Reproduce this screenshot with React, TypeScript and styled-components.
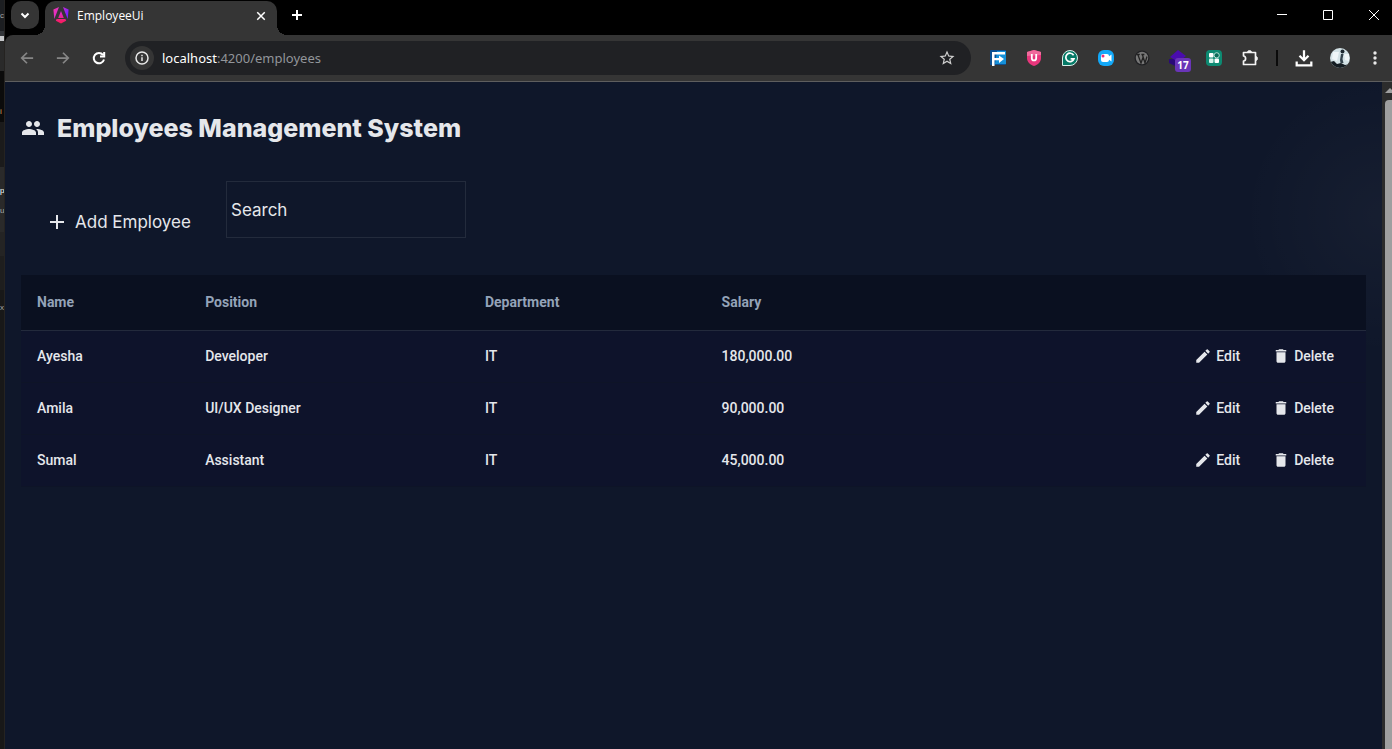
import React from "react";
import styled, { createGlobalStyle } from "styled-components";
import { MdGroup, MdAdd, MdEdit, MdDelete, MdStarBorder } from "react-icons/md";

const Global = createGlobalStyle`
  *, *::before, *::after { box-sizing: border-box; }
  body { margin: 0; background: #000; font-family: Roboto, "Noto Sans", sans-serif; }
  button, input { font: inherit; color: inherit; background: none; border: 0; padding: 0; margin: 0; outline: 0; }
  svg { display: block; flex: none; }
`;

const Desktop = styled.div`
  display: flex;
  height: 100vh;
  overflow: hidden;
`;

const EditorEdge = styled.aside`
  flex: none;
  width: 5px;
  overflow: hidden;
  display: flex;
  flex-direction: column;
  align-items: stretch;
  background: #181818;
  border-right: 1px solid #252321;
`;

const EdgeBlock = styled.div<{ $h: number; $bg?: string; $color?: string }>`
  flex: none;
  height: ${(p) => p.$h}px;
  background: ${(p) => p.$bg ?? "transparent"};
  color: ${(p) => p.$color ?? "#a8a8a8"};
  font: 400 8px/${(p) => p.$h}px "Liberation Sans", sans-serif;
`;

const BrowserWindow = styled.div`
  flex: 1;
  min-width: 0;
  display: flex;
  flex-direction: column;
  background: #000;
`;

const TabStrip = styled.header`
  flex: none;
  height: 35px;
  display: flex;
  align-items: flex-start;
  color: #fff;
`;

const TabSearch = styled.button`
  width: 28px;
  height: 28px;
  margin: 1px 6px 0;
  border-radius: 10px;
  background: #353535;
  display: grid;
  place-items: center;
`;

const Tab = styled.div`
  position: relative;
  width: 232px;
  height: 34px;
  margin-top: 1px;
  padding: 0 10px 5px 8px;
  border-radius: 10px 10px 0 0;
  background: #353535;
  display: flex;
  align-items: center;
  gap: 8px;
  font: 400 12px/16px "Open Sans", sans-serif;
  &::before, &::after {
    content: "";
    position: absolute;
    bottom: 0;
    width: 10px;
    height: 10px;
  }
  &::before { right: 100%; background: radial-gradient(circle at 0 0, transparent 10px, #353535 10px); }
  &::after { left: 100%; background: radial-gradient(circle at 100% 0, transparent 10px, #353535 10px); }
`;

const TabTitle = styled.span`
  flex: 1;
`;

const GlyphButton = styled.button<{ $w: number; $h: number }>`
  flex: none;
  width: ${(p) => p.$w}px;
  height: ${(p) => p.$h}px;
  display: grid;
  place-items: center;
`;

const WindowControls = styled.div`
  margin: 0 -5px 0 auto;
  display: flex;
`;

const Toolbar = styled.nav`
  flex: none;
  height: 47px;
  padding: 0 0 0 4px;
  background: #353535;
  border-bottom: 1px solid #5e5e5e;
  border-top-left-radius: 8px;
  display: flex;
  align-items: center;
  color: #fff;
`;

const Omnibox = styled.div`
  flex: 1;
  min-width: 0;
  height: 34px;
  margin: 0 9px 0 8px;
  padding: 0 5px;
  border-radius: 17px;
  background: #202124;
  display: flex;
  align-items: center;
`;

const SiteInfo = styled.button`
  width: 24px;
  height: 24px;
  margin-right: 8px;
  border-radius: 12px;
  background: #353535;
  display: grid;
  place-items: center;
`;

const Url = styled.span`
  flex: 1;
  font: 400 13px/20px "Noto Sans", sans-serif;
  color: #92959a;
  b { font-weight: 400; color: #fff; }
`;

const Divider = styled.span`
  width: 2px;
  height: 16px;
  margin: 0 8px;
  background: #0b0b0b;
`;

const Extension = styled(GlyphButton)`
  position: relative;
`;

const Badge = styled.span`
  position: absolute;
  right: 5px;
  bottom: 3px;
  width: 16px;
  height: 14px;
  border-radius: 3px;
  background: #6a35b8;
  color: #fff;
  font: 700 10px/14px "Noto Sans", sans-serif;
  text-align: center;
`;

const Viewport = styled.div`
  flex: 1;
  min-height: 0;
  display: flex;
`;

const Page = styled.main`
  flex: 1;
  min-width: 0;
  padding: 16px;
  color: #e5e7eb;
  background:
    radial-gradient(circle at 100% 20%, rgba(255, 255, 255, 0.03), transparent 140px),
    #0f172a;
`;

const ScrollTrack = styled.div`
  flex: none;
  width: 10px;
  padding-left: 3px;
  background: #2c2c2c;
  display: flex;
  flex-direction: column;
`;

const ScrollArrow = styled.svg`
  margin: 6px 0 7px;
`;

const ScrollThumb = styled.div`
  flex: 1;
  border-radius: 4px 0 0 0;
  background: #9f9f9f;
`;

const Title = styled.h1`
  margin: 12px 0 0;
  height: 36px;
  display: flex;
  align-items: center;
  gap: 12px;
  font: 800 25px/36px Inter, "Open Sans", sans-serif;
`;

const Actions = styled.div`
  margin-top: 35px;
  height: 57px;
  display: flex;
  align-items: flex-start;
  gap: 20px;
`;

const AddButton = styled.button`
  height: 40px;
  margin-top: 21px;
  width: 185px;
  padding-left: 24px;
  display: flex;
  align-items: center;
  gap: 6px;
  font: 400 17px/24px Inter, sans-serif;
`;

const Search = styled.input`
  width: 240px;
  height: 57px;
  padding: 0 4px;
  border: 1px solid #232b3c;
  font: 400 17px/24px Inter, sans-serif;
  &::placeholder { color: #e5e7eb; opacity: 1; }
`;

const Table = styled.table`
  width: 100%;
  margin-top: 37px;
  border-collapse: separate;
  border-spacing: 0;
  table-layout: fixed;
  font: 400 14px/20px Roboto, sans-serif;
  background: #0e132b;
`;

const Col = styled.col<{ $w?: string }>`
  width: ${(p) => p.$w ?? "auto"};
`;

const HeadCell = styled.th`
  height: 56px;
  padding: 0 16px 2px;
  text-align: left;
  font-weight: 700;
  color: #94a3b8;
  background: #0a1020;
  border-bottom: 1px solid #232a3c;
`;

const Cell = styled.td`
  height: 52px;
  padding: 0 16px 1px;
  font-weight: 500;
  border-bottom: 1px solid #0e1427;
`;

const RowActions = styled.div`
  display: flex;
  justify-content: flex-end;
  gap: 8px;
`;

const RowButton = styled.button`
  display: flex;
  align-items: center;
  gap: 4px;
  padding: 0 12px;
  &:last-child { padding-right: 16px; }
`;

const employees = [
  { name: "Ayesha", position: "Developer", department: "IT", salary: "180,000.00" },
  { name: "Amila", position: "UI/UX Designer", department: "IT", salary: "90,000.00" },
  { name: "Sumal", position: "Assistant", department: "IT", salary: "45,000.00" },
];

const Stroke = ({ d, size = 16, color = "#fff", width = 2 }: { d: string; size?: number; color?: string; width?: number }) => (
  <svg width={size} height={size} viewBox="0 0 16 16" fill="none" stroke={color} strokeWidth={width}>
    <path d={d} />
  </svg>
);

const AngularLogo = () => (
  <svg width="16" height="17" viewBox="0 0 16 17">
    <defs>
      <linearGradient id="ng" x1="0" y1="0" x2="1" y2="0.4">
        <stop offset="0" stopColor="#f637a8" />
        <stop offset="0.5" stopColor="#d62bd0" />
        <stop offset="1" stopColor="#7a22ff" />
      </linearGradient>
      <linearGradient id="ngr" x1="0" y1="0" x2="0" y2="1">
        <stop offset="0" stopColor="#d92bd8" />
        <stop offset="1" stopColor="#fb1a52" />
      </linearGradient>
    </defs>
    <path fill="url(#ng)" d="M6 0 .4 2.6 1.3 12 6 0zM10 0l5.600 2.600-.9 9.400L10 0z" />
    <path fill="url(#ngr)" d="M8 4 5.200 11h5.600L8 4zM3.600 12h8.800l.8 1.800L8 16.600l-5.200-2.800L3.600 12z" />
  </svg>
);

const extensions: React.ReactNode[] = [
  <svg key="f" width="16" height="16" viewBox="0 0 16 16">
    <rect width="16" height="15" rx="1" fill="#0b4f91" />
    <path d="M7 1h9v13H5z" fill="#1590d8" />
    <path d="M2 2h13v2.500H4.500V8H10v2.200H4.500V16H2z" fill="#fff" />
    <path d="M9 5.500 14 9l-5 4z" fill="#fff" />
  </svg>,
  <svg key="u" width="16" height="16" viewBox="0 0 16 16">
    <path d="M8 0 15 2v6c0 4-3 6.600-7 8-4-1.400-7-4-7-8V2z" fill="#e8367c" />
    <path d="M8 0 15 2v3L1 6V2z" fill="#f06a9c" />
    <path d="M5.800 4v4.200a2.200 2.200 0 0 0 4.400 0V4" fill="none" stroke="#fff" strokeWidth="1.800" />
  </svg>,
  <svg key="g" width="16" height="16" viewBox="0 0 16 16">
    <path d="M.5 15.500V8A7.500 7.500 0 1 1 8 15.500z" fill="#067a67" stroke="#d8efe9" />
    <path d="M11.600 5.200A4.200 4.200 0 1 0 12 8.800H8.600" fill="none" stroke="#fff" strokeWidth="1.700" />
  </svg>,
  <svg key="c" width="16" height="16" viewBox="0 0 16 16">
    <rect width="16" height="16" rx="6" fill="#12a8f8" />
    <rect x="3" y="4" width="8" height="8" rx="2" fill="#fff" />
    <path d="m10 7 3.500-2.500v7L10 9z" fill="#fff" />
    <circle cx="5" cy="6" r="1.500" fill="#ee2b7b" />
  </svg>,
  <svg key="w" width="16" height="16" viewBox="0 0 16 16">
    <circle cx="8" cy="8" r="7.500" fill="#202124" />
    <circle cx="8" cy="8" r="6.200" fill="#777" />
    <path d="M2.600 4.500h3.200M7.400 4.500h3M4 5l3 8 2-5.500M8.500 5l2.500 8 2-6.500" fill="none" stroke="#222" strokeWidth="1.300" />
  </svg>,
];

const Photo = () => (
  <svg width="20" height="20" viewBox="0 0 20 20">
    <clipPath id="photo"><circle cx="10" cy="10" r="10" /></clipPath>
    <g clipPath="url(#photo)">
      <path fill="#d3e2e6" d="M0 0h20v20H0z" />
      <path fill="#eff6f8" d="M3 4l6 0-2 9-5-2zM14 6h5v7l-4-1z" />
      <circle cx="12.500" cy="3.500" r="2" fill="#1c2830" />
      <path fill="#33434d" d="M11 6h2.500l-1 5 1 4h-3l-.5-3z" />
      <path fill="#141c22" d="M0 14l4-1 3 3 4-1 4 2 5-1v4H0z" />
    </g>
  </svg>
);

export default function App() {
  return (
    <Desktop>
      <Global />
      <EditorEdge aria-hidden="true">
        <EdgeBlock $h={31} $bg="#1c1e21">c</EdgeBlock>
        <EdgeBlock $h={5} $bg="#33363a" />
        <EdgeBlock $h={5} $bg="#c6c8ca" />
        <EdgeBlock $h={30} $bg="#2a2a2a" />
        <EdgeBlock $h={31} $bg="#0b0b0b" />
        <EdgeBlock $h={20} $bg="#0b0b0b" $color="#d9a560">i</EdgeBlock>
        <EdgeBlock $h={45} $bg="#1b1b1b" />
        <EdgeBlock $h={14} $bg="#2a2a2a" />
        <EdgeBlock $h={20} $bg="#2a2a2a" $color="#fff">p</EdgeBlock>
        <EdgeBlock $h={20} $bg="#2a2a2a">u</EdgeBlock>
        <EdgeBlock $h={11} $bg="#2a2a2a" />
        <EdgeBlock $h={24} $bg="#242424" />
        <EdgeBlock $h={34} $bg="#1e1e1e" />
        <EdgeBlock $h={8} />
        <EdgeBlock $h={20}>x</EdgeBlock>
      </EditorEdge>
      <BrowserWindow>
        <TabStrip>
          <TabSearch aria-label="Search tabs"><Stroke d="M4.500 6.500 8 10l3.500-3.500" /></TabSearch>
          <Tab>
            <AngularLogo />
            <TabTitle>EmployeeUi</TabTitle>
            <GlyphButton $w={12} $h={16} aria-label="Close tab"><Stroke size={12} d="m3 3 10 10M13 3 3 13" /></GlyphButton>
          </Tab>
          <GlyphButton $w={40} $h={30} aria-label="New tab"><Stroke d="M8 3v10M3 8h10" /></GlyphButton>
          <WindowControls>
            <GlyphButton $w={46} $h={30} aria-label="Minimize"><Stroke d="M3 7.500h10" width={1} /></GlyphButton>
            <GlyphButton $w={46} $h={30} aria-label="Maximize"><Stroke d="M3.500 3.500h9v9h-9z" width={1} /></GlyphButton>
            <GlyphButton $w={46} $h={30} aria-label="Close"><Stroke d="m3 3 10 10M13 3 3 13" width={1} /></GlyphButton>
          </WindowControls>
        </TabStrip>
        <Toolbar>
          <GlyphButton $w={36} $h={34} aria-label="Back"><Stroke d="M15 8H2M8 2 2 8l6 6" color="#868686" size={14} /></GlyphButton>
          <GlyphButton $w={36} $h={34} aria-label="Forward"><Stroke d="M1 8h13M8 2l6 6-6 6" color="#868686" size={14} /></GlyphButton>
          <GlyphButton $w={36} $h={34} aria-label="Reload"><Stroke d="M13 9.500A5.200 5.200 0 1 1 12 4.800M13.200 2v4.500H9" /></GlyphButton>
          <Omnibox>
            <SiteInfo aria-label="Site information">
              <svg width="16" height="16" viewBox="0 0 16 16" fill="none" stroke="#e8e8e8" strokeWidth="1.500">
                <circle cx="8" cy="8" r="6" />
                <path d="M8 7.200V11M8 4.800v1.500" />
              </svg>
            </SiteInfo>
            <Url><b>localhost</b>:4200/employees</Url>
            <GlyphButton $w={38} $h={30} aria-label="Bookmark"><MdStarBorder size={18} color="#d0d0d0" /></GlyphButton>
          </Omnibox>
          {extensions.map((icon, i) => (
            <GlyphButton key={i} $w={36} $h={34} aria-label="Extension">{icon}</GlyphButton>
          ))}
          <Extension $w={36} $h={34} aria-label="Extension, 17 items">
            <svg width="20" height="20" viewBox="0 0 20 20">
              <path d="M1 11v4l8 4V11z" fill="#2a0a78" />
              <path d="M10 2 18 8l-8 6-8-5z" fill="#4a0cae" />
            </svg>
            <Badge>17</Badge>
          </Extension>
          <GlyphButton $w={36} $h={34} aria-label="Extension">
            <svg width="16" height="16" viewBox="0 0 16 16">
              <rect width="16" height="16" rx="4" fill="#0d8a72" />
              <rect x="3" y="3" width="4.500" height="4.500" rx="1" fill="#fff" />
              <rect x="3" y="8.500" width="4.500" height="4.500" rx="1" fill="#d8f2ec" />
              <rect x="8.500" y="8.500" width="4.500" height="4.500" rx="1" fill="#fff" />
              <circle cx="10.700" cy="5.300" r="2.600" fill="#0a6c5a" stroke="#d8f2ec" strokeWidth=".8" />
            </svg>
          </GlyphButton>
          <GlyphButton $w={36} $h={34} aria-label="Extensions">
            <svg width="18" height="18" viewBox="0 0 18 18" fill="none" stroke="#f4f4f4" strokeWidth="1.700" strokeLinejoin="round">
              <path d="M2.500 3.500h12v12h-12V12c2.800-.2 2.800-4.800 0-5z" />
              <path d="M6.500 3.200a2 1.700 0 0 1 4 0zM14.800 7.500a1.700 2 0 0 1 0 4z" fill="#f4f4f4" strokeWidth=".8" />
            </svg>
          </GlyphButton>
          <Divider />
          <GlyphButton $w={36} $h={34} aria-label="Downloads"><Stroke size={18} d="M8 1v8.500M4 6l4 4 4-4M1.500 11v3.500h13V11" width={2} /></GlyphButton>
          <GlyphButton $w={36} $h={34} aria-label="Profile"><Photo /></GlyphButton>
          <GlyphButton $w={34} $h={34} aria-label="Menu">
            <svg width="16" height="16" viewBox="0 0 16 16" fill="#e8e8e8">
              <circle cx="8" cy="3" r="1.700" /><circle cx="8" cy="8" r="1.700" /><circle cx="8" cy="13" r="1.700" />
            </svg>
          </GlyphButton>
        </Toolbar>
        <Viewport>
          <Page>
            <Title><MdGroup size={24} />Employees Management System</Title>
            <Actions>
              <AddButton><MdAdd size={24} />Add Employee</AddButton>
              <Search type="text" placeholder="Search" aria-label="Search" />
            </Actions>
            <Table>
              <colgroup>
                <Col $w="12.5%" />
                <Col $w="20.8%" />
                <Col $w="17.6%" />
                <Col $w="17.5%" />
                <Col />
              </colgroup>
              <thead>
                <tr>
                  <HeadCell>Name</HeadCell>
                  <HeadCell>Position</HeadCell>
                  <HeadCell>Department</HeadCell>
                  <HeadCell>Salary</HeadCell>
                  <HeadCell aria-label="Actions" />
                </tr>
              </thead>
              <tbody>
                {employees.map((e) => (
                  <tr key={e.name}>
                    <Cell>{e.name}</Cell>
                    <Cell>{e.position}</Cell>
                    <Cell>{e.department}</Cell>
                    <Cell>{e.salary}</Cell>
                    <Cell>
                      <RowActions>
                        <RowButton><MdEdit size={18} />Edit</RowButton>
                        <RowButton><MdDelete size={18} />Delete</RowButton>
                      </RowActions>
                    </Cell>
                  </tr>
                ))}
              </tbody>
            </Table>
          </Page>
          <ScrollTrack>
            <ScrollArrow width="7" height="5" viewBox="0 0 7 5"><path d="M0 5 5 0l5 5z" fill="#9f9f9f" /></ScrollArrow>
            <ScrollThumb />
          </ScrollTrack>
        </Viewport>
      </BrowserWindow>
    </Desktop>
  );
}
